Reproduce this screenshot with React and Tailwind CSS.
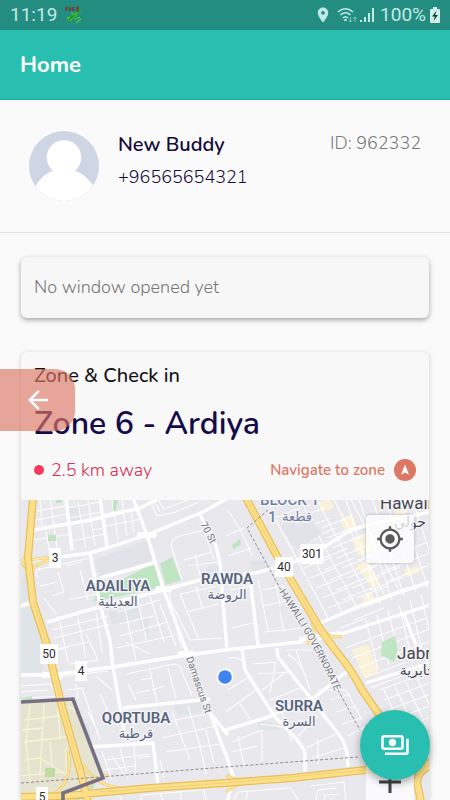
import { MdArrowBack, MdGpsFixed, MdLocationOn, MdOutlinePayments } from 'react-icons/md'

const HIGHWAYS = [
  'M33 498 L28 558 L33 602 L47 645 L62 707 L80 770 L88 802',
  'M246 498 L278 558 L322 632 L336 651 Q352 670 362 690 L378 713 L400 745 L418 772',
  'M18 797 L63 796 L150 788 L225 783 L292 778 L365 770 L432 763',
  'M432 765 Q418 770 417 782 L421 802'
]

const RAMPS = [
  'M68 750 Q74 785 50 796',
  'M84 765 Q92 785 125 789',
  'M70 802 Q84 786 108 774',
  'M22 562 Q26 556 28 548',
  'M22 562 Q27 568 29 576',
  'M29 560 L52 557',
  'M31 572 Q36 562 52 560',
  'M312 622 Q318 638 306 643',
  'M322 628 Q330 640 342 636',
  'M226 775 Q236 782 252 778',
  'M226 792 Q236 784 248 782'
]

const ROADS = [
  'M20 562 L90 553 L107 548 L147 535 L183 520 L203 512 L228 498',
  'M133 498 L147 535 L163 588 L187 652 L198 682 L210 713 L226 755 L233 775 L228 800',
  'M47 622 L117 602 L163 590 L200 580 L225 577 L255 573 L285 565 Q312 556 338 538 Q350 529 368 525 L430 512',
  'M66 498 L72 550',
  'M100 498 L107 546',
  'M33 530 L90 520 L140 508 L160 498',
  'M90 553 L100 605 L110 640 L113 667 L120 707 L124 730',
  'M100 578 L157 562',
  'M20 675 L50 675 L113 667 L187 655 L225 650 L300 642 L338 635 L430 605',
  'M318 624 L362 605 L430 582',
  'M250 578 L258 645',
  'M200 515 L212 535 Q222 560 222 590 L227 650',
  'M242 648 L245 670 L275 717 Q305 745 305 755 L305 772',
  'M277 648 L278 657 L312 700 L340 736 Q348 746 348 767',
  'M222 731 L268 717 L315 697 L342 675 L354 668',
  'M366 683 L430 663',
  'M403 612 L418 650',
  'M123 708 L210 699',
  'M90 747 L153 743 L158 785',
  'M210 713 L228 735',
  'M20 606 L33 603'
]

const STREETS = [
  'M36 511 L66 506 M35 520 L68 514 M34 540 L70 534 M50 498 L57 548 M40 500 L42 528 M46 532 L50 554',
  'M68 508 L100 502 M69 518 L101 512 M71 541 L105 534 M78 502 L86 548 M88 500 L95 546 M93 530 L104 528',
  'M104 514 L138 508 M105 526 L141 519 M112 500 L118 540 M122 500 L127 536 M131 510 L134 532',
  'M150 500 L157 516 L176 512 L199 502 M158 500 L164 509 L188 500 M160 512 L153 498',
  'M171 545 Q172 538 180 536 L204 530 L214 560 M171 545 L182 580 M184 560 L212 552 M195 555 L200 575 M188 566 L218 562',
  'M170 590 Q168 602 176 612 L190 640 L222 638 M180 594 L198 638 M180 594 L218 586 M186 612 L218 604 M196 586 L203 610',
  'M36 570 L90 558 M38 578 Q34 572 40 568 M40 586 L58 582 M58 572 L64 592 L52 596 M66 566 L82 562 M44 598 L56 614 M68 600 L96 594 M80 570 L88 600',
  'M52 630 L108 616 M54 638 L110 624 M60 622 L68 662 M78 618 L86 658 M96 612 L102 652 M52 650 L88 642 M86 634 L98 660 L70 664 M60 650 L70 646',
  'M118 612 L160 600 M120 624 L154 616 M116 648 L172 636 M124 604 L136 660 M138 600 L146 640 M150 596 L164 642 M120 636 L168 622 M160 604 L176 646 M126 642 L150 654 M176 626 L182 648',
  'M60 686 Q56 680 64 676 L108 671 M66 690 L82 688 L100 740 M76 684 L78 698 M96 676 L112 690 M88 712 L98 732 M100 694 L110 716',
  'M126 674 L174 664 Q180 664 182 672 L192 696 M128 684 L136 700 M150 670 L157 702 M168 668 L176 698 M140 680 L152 678 M132 694 L150 690 M152 690 L164 686',
  'M102 752 L112 780 M106 760 L150 754 M120 748 L128 778 M134 746 L136 776 M104 770 L134 766 M138 758 L150 756 M112 756 L124 774',
  'M162 738 L216 726 M165 752 L220 744 M172 712 L190 760 M188 706 L200 746 M200 746 L206 774 M160 760 L164 778 M206 730 L214 764 M166 722 L206 714',
  'M20 686 L50 684 Q56 690 58 702 M20 692 L48 690 M24 698 L58 696',
  'M228 510 L240 530 Q246 540 252 556 M228 556 L252 548 M226 536 L244 528 M230 590 L250 586 M232 628 L256 622 M258 580 L268 630 M262 590 L284 586 M262 606 L292 600 M264 632 L304 628 M276 584 L280 606 M280 612 L284 632',
  'M228 658 Q240 656 244 664 M252 664 L276 662 L270 692 M258 674 L290 672 M262 690 L286 672 M270 700 L300 688 M282 712 L292 742 M290 708 L302 700 M228 690 L250 676 M226 712 L258 688 M240 704 L252 722',
  'M232 742 L262 730 L262 762 M238 736 L244 766 M260 724 L290 728 M298 736 L318 716 M306 748 L336 734 M312 758 L344 748 M320 704 L332 728 M318 764 L318 740 M232 752 L258 746',
  'M288 654 Q300 662 306 676 M286 650 L312 650 M296 650 L310 690 M318 690 L346 690 L362 720 M330 700 L350 694 M336 712 L356 706 M342 724 L362 718 M348 736 L370 724',
  'M234 800 L238 792 L290 788 L300 802 M246 800 L248 790 M310 786 L344 782 L346 802 M316 800 L318 790 L336 788 M324 802 L325 795 L340 794 M330 802 L332 798',
  'M140 802 L142 795 L204 790 L206 802 M120 796 L122 802 M160 794 L164 802 M180 792 L182 802'
]

const ZONE_STREETS =
  'M24 742 L66 737 M24 720 L60 716 M30 704 L26 742 L30 782 M44 704 L40 776 M58 708 L60 740 M24 760 L40 758 L68 776 M20 776 L60 772 M66 748 L66 776 M50 742 L52 764 M22 730 L42 728 M68 706 L84 716'

// Small regular blocks east of the highway: [x, y, dx, dy, stepX, stepY, count]
const HATCHES = [
  [268, 508, 26, -10, 6, 10, 13],
  [294, 520, 30, -12, 6, 10, 11],
  [322, 528, 30, -12, 5, 10, 9],
  [350, 540, 34, -13, 4, 10, 7],
  [382, 560, 46, -18, 2, 11, 3],
  [276, 520, 52, 98, 14, -6, 6],
  [346, 500, 34, 104, 12, -4, 6],
  [366, 620, 12, 50, 11, -5, 6],
  [346, 648, 80, -30, 6, 10, 5],
  [380, 690, 48, -18, 4, 10, 5],
  [384, 690, 20, 44, 11, -4, 4]
]

const GREENS = [
  'M117 582 L155 563 L162 587 L93 602 L98 592 Z',
  'M160 564 L172 557 L181 580 L166 585 Z',
  'M48 535 h8 v6 h-8 Z',
  'M113 498 L118 498 L116 512 L113 510 Z',
  'M56 498 h6 v5 h-6 Z',
  'M232 545 L240 539 L241 545 L233 549 Z',
  'M382 642 L395 636 L398 650 L394 662 L381 655 Z',
  'M22 698 L32 696 L32 701 L22 702 Z',
  'M86 786 L96 784 L92 790 Z',
  'M72 796 L82 798 L76 802 Z'
]

const WATER = [
  'M21 608 L33 606 L46 648 L42 672 L21 673 Z',
  'M21 580 L27 566 L30 600 L21 602 Z',
  'M68 508 L80 506 L83 521 L70 523 Z',
  'M108 612 L138 606 L140 618 L112 624 Z',
  'M138 620 L148 618 L150 634 L142 630 Z',
  'M174 706 L202 702 L202 712 L178 716 Z',
  'M250 562 L266 560 L268 568 L252 572 Z',
  'M78 728 L88 724 L92 742 L76 744 Z',
  'M258 722 L272 722 L280 730 L260 730 Z',
  'M206 568 L222 564 L224 574 L206 577 Z'
]

// Large built-up lots without inner streets
const LOTS = [
  'M94 560 L148 540 L154 560 L100 576 Z',
  'M280 526 L306 512 L322 534 L296 550 Z'
]

const SHOPS = [
  'M352 540 L372 532 L378 548 L358 556 Z',
  'M340 520 L352 514 L356 526 L344 530 Z',
  'M356 566 L368 560 L380 584 L372 588 Z',
  'M392 504 L404 500 L408 512 L396 516 Z',
  'M352 650 L368 644 L378 672 L364 678 Z',
  'M362 596 L372 592 L374 600 L364 603 Z',
  'M318 502 L330 499 L334 508 L322 512 Z',
  'M404 570 L418 566 L420 572 L406 577 Z'
]

const DISTRICTS = [
  { name: 'ADAILIYA', arabic: 'العديلية', x: 118, y: 591 },
  { name: 'RAWDA', arabic: 'الروضة', x: 227, y: 584 },
  { name: 'QORTUBA', arabic: 'قرطبة', x: 136, y: 723 },
  { name: 'SURRA', arabic: 'السرة', x: 299, y: 711 }
]

const SHIELDS = [
  { label: '3', x: 55, y: 558, w: 12 },
  { label: '50', x: 49, y: 654, w: 18 },
  { label: '4', x: 81, y: 671, w: 12 },
  { label: '5', x: 42, y: 797, w: 12 },
  { label: '40', x: 284, y: 567, w: 18 },
  { label: '301', x: 312, y: 554, w: 23 }
]

function StatusBar() {
  return (
    <div className="flex h-[30px] items-center justify-between bg-[#238d82] px-[10px] font-['Roboto',sans-serif] text-[19px] leading-[30px] text-[#c3e9e4]">
      <div className="flex items-center gap-2">
        <span>11:19</span>
        <svg viewBox="0 0 18 18" className="size-[18px]" aria-hidden="true">
          <path d="M14 3 L10 7 L2 13 L5 16 L11 10 L16 5 Z" fill="#35b52c" />
          <path d="M6 7 L10 9 M2 11 L6 14 M10 13 L15 11 M11 17 L16 13" stroke="#4fd02f" strokeWidth="1.2" />
          <path d="M4 14 L9 9 M12 6 L15 4" stroke="#17711d" strokeWidth="1.2" strokeDasharray="2 1" />
          <path d="M1 5 V1 H3 M1 3 H3 M4 5 L5 1 L6 5 M8 1 V5 M10 1 L8 3 L10 5 M14 1 H12 V5 H14 M12 3 H14" stroke="#8d2b22" fill="none" />
        </svg>
      </div>
      <div className="flex items-center">
        <MdLocationOn className="mr-[5px] size-[18px]" />
        <svg viewBox="0 0 20 16" className="mr-[3px] h-4 w-5" fill="none" stroke="currentColor" strokeWidth="1.6">
          <path d="M1 5 Q8.500 -1.500 16 5 M3.500 8 Q8.500 3.500 13.500 8 M6 11 Q8.500 8.500 11 11" />
          <circle cx="8.500" cy="13" r="1.300" fill="currentColor" stroke="none" />
          <path d="M13.500 10 V15 M12 13.500 L13.500 15 L15 13.500 M18 15 V10 M16.500 11.500 L18 10 L19.500 11.500" strokeWidth="1" opacity="0.6" />
        </svg>
        <svg viewBox="0 0 14 14" className="mr-[6px] size-[14px]" fill="currentColor">
          <path d="M0 12 h2 v2 h-2 Z M4 9 h2 v5 h-2 Z M8 5 h2 v9 h-2 Z M12 0 h2 v14 h-2 Z" />
        </svg>
        <span>100%</span>
        <svg viewBox="0 0 10 16" className="ml-1 h-4 w-[10px]">
          <path d="M3 0 H7 V2 H9 Q10 2 10 3 V15 Q10 16 9 16 H1 Q0 16 0 15 V3 Q0 2 1 2 H3 Z" fill="#d3efeb" />
          <path d="M6.500 3.500 L2 9.500 H4.800 L3.500 14 L8 8 H5.200 Z" fill="#12403b" />
        </svg>
      </div>
    </div>
  )
}

function Profile() {
  return (
    <section className="flex gap-[19px] border-b border-[#e4e4e4] px-[29px] py-[31px]">
      <svg viewBox="0 0 70 70" className="size-[70px] shrink-0" role="img" aria-label="Avatar">
        <clipPath id="avatar">
          <circle cx="35" cy="35" r="35" />
        </clipPath>
        <g clipPath="url(#avatar)">
          <rect width="70" height="70" fill="#ced5e5" />
          <circle cx="35" cy="26.500" r="17.300" fill="#fff" />
          <path d="M6 56 Q14 42 26 39 H44 Q56 42 65 56 V70 H6 Z" fill="#fff" />
        </g>
      </svg>
      <div className="flex-1 text-[#150b3d]">
        <h2 className="text-[20px] font-semibold leading-[28px]">New Buddy</h2>
        <p className="mt-1 text-[18px] font-light leading-[28px]">+96565654321</p>
      </div>
      <p className="text-[18px] font-light leading-[24px] text-[#777]">ID: 962332</p>
    </section>
  )
}

function MapLabel({ name, arabic, x, y }) {
  return (
    <g fill="#56647c" stroke="#f4f4f7" strokeWidth="3" paintOrder="stroke" textAnchor="middle">
      <text x={x} y={y} fontSize="15" fontWeight="600">{name}</text>
      <text x={x} y={y + 15} fontSize="13">{arabic}</text>
    </g>
  )
}

function ZoneMap() {
  return (
    <svg
      viewBox="21 500 408 300"
      preserveAspectRatio="xMidYMin slice"
      className="block h-full w-full font-['Roboto','Noto_Sans','DejaVu_Sans',sans-serif]"
      role="img"
      aria-label="Map"
    >
      <rect x="21" y="500" width="408" height="300" fill="#e9e8ed" />
      <path d={WATER.join(' ')} fill="#dfe4e8" />
      <path d={SHOPS.join(' ')} fill="#fbf3d9" />

      <g fill="none" stroke="#fff" strokeLinejoin="round">
        {STREETS.map((d) => (
          <path key={d} d={d} strokeWidth="1.200" opacity="0.85" />
        ))}
        {HATCHES.map(([x, y, dx, dy, stepX, stepY, count]) =>
          Array.from({ length: count }, (_, i) => (
            <path key={`${x}-${y}-${i}`} d={`M${x + i * stepX} ${y + i * stepY} l${dx} ${dy}`} strokeWidth="1.200" opacity="0.85" />
          ))
        )}
      </g>

      <path d={LOTS.join(' ')} fill="#e2e3e9" />
      <path d={GREENS.join(' ')} fill="#bfe5c3" />

      <g fill="none" stroke="#fff" strokeLinejoin="round">
        {ROADS.map((d) => (
          <path key={d} d={d} strokeWidth="3.400" />
        ))}
        <path d="M140 535 H154 M158 589 H169 M181 654 H193 M302 640 L340 634 M44 675 H60" strokeWidth="6" strokeLinecap="round" />
      </g>

      <path d="M21 702 L73 699 L103 778 L63 793 V800 H21 Z" fill="#e4e3c6" fillOpacity="0.75" />
      <path d={ZONE_STREETS} fill="none" stroke="#f6f5d4" strokeWidth="1.300" />
      <path d="M45 768 h10 v9 h-10 Z" fill="#bddca4" />

      <g fill="none">
        <path d={RAMPS.join(' ')} stroke="#edc965" strokeWidth="3" />
        <path d={RAMPS.join(' ')} stroke="#fbe6a2" strokeWidth="1.800" />
        <path d={HIGHWAYS.join(' ')} stroke="#eabf57" strokeWidth="8" strokeLinejoin="round" />
        <path d={HIGHWAYS.join(' ')} stroke="#fbdf8b" strokeWidth="5.600" strokeLinejoin="round" />
        <path d="M34 602 L47 645 L62 707 L80 770 M246 498 L278 558 L322 632 M100 792 L225 783 L365 770" stroke="#f3cd6d" strokeWidth="0.800" />
        <path
          d="M21 783 L100 777 L225 767 L358 757 M268 510 L247 528 L281 590 M338 690 L360 730"
          stroke="#8e8c93"
          strokeDasharray="3 2"
        />
        <path d="M20 702 L73 699 L103 778 L63 793 V802" stroke="#777083" strokeWidth="3.600" />
      </g>

      {DISTRICTS.map((district) => (
        <MapLabel key={district.name} {...district} />
      ))}

      <g fill="#7082a3" stroke="#f4f4f7" strokeWidth="3" paintOrder="stroke">
        <text x="260" y="505" fontSize="15" fontWeight="500">BLOCK 1</text>
        <text x="268" y="522" fontSize="15" fontWeight="500">1</text>
        <text x="297" y="521" fontSize="13" textAnchor="middle">قطعة</text>
      </g>
      <g fill="#45474d" stroke="#f4f4f7" strokeWidth="3" paintOrder="stroke">
        <text x="380" y="509" fontSize="17">Hawalli</text>
        <text x="410" y="527" fontSize="14" textAnchor="middle">حولي</text>
        <text x="397" y="659" fontSize="17">Jabriya</text>
        <text x="422" y="675" fontSize="14" textAnchor="middle">الجابرية</text>
      </g>

      <path id="governorate" d="M279 592 Q312 640 334 690" fill="none" />
      <g fill="#76777d" stroke="#f4f4f7" strokeWidth="2" paintOrder="stroke" fontSize="10">
        <text>
          <textPath href="#governorate">HAWALLI GOVERNORATE</textPath>
        </text>
        <text transform="translate(200 524) rotate(62)">70 St</text>
        <text transform="translate(186 658) rotate(71)">Damascus St</text>
      </g>

      {SHIELDS.map(({ label, x, y, w }) => (
        <g key={label}>
          <rect x={x - w / 2} y={y - 10} width={w} height="20" rx="1" fill="#fff" />
          <text x={x} y={y + 4} fontSize="12" textAnchor="middle" fill="#2b2b2b">{label}</text>
        </g>
      ))}

      <circle cx="225" cy="677" r="8.500" fill="#fff" />
      <circle cx="225" cy="677" r="6.800" fill="#3f83ee" />
    </svg>
  )
}

function ZoneCard() {
  return (
    <section className="mt-[34px] flex flex-1 flex-col overflow-hidden rounded-t-md bg-[#f8f8f8] shadow-[0_1px_5px_rgba(0,0,0,0.2)]">
      <div className="px-[13px] pb-[18px] pt-3">
        <h3 className="text-[20px] font-medium leading-[24px] text-[#111]">Zone &amp; Check in</h3>
        <p className="mt-3 text-[32px] font-semibold leading-[48px] text-[#150b4a]">Zone 6 - Ardiya</p>
        <div className="mt-[10px] flex items-center justify-between leading-[24px]">
          <p className="flex items-center gap-[7px] text-[18px] font-light text-[#d62e52]">
            <span className="size-[10px] rounded-full bg-[#f9385f]" />
            2.5 km away
          </p>
          <a href="#navigate" className="flex items-center gap-[9px] text-[15px] font-semibold text-[#dd7866]">
            Navigate to zone
            <span className="flex size-[22px] items-center justify-center rounded-full bg-[#dd7866] text-white">
              <svg viewBox="0 0 10 12" className="h-3 w-[10px]" fill="currentColor">
                <path d="M5 0.500 L9 10.800 L5 8.600 L1 10.800 Z" />
              </svg>
            </span>
          </a>
        </div>
      </div>
      <div className="relative min-h-[300px] flex-1">
        <div className="absolute inset-0">
          <ZoneMap />
        </div>
        <button
          type="button"
          aria-label="My location"
          className="absolute right-[15px] top-[15px] flex size-12 items-center justify-center rounded-sm bg-white/75 text-[#5a5a5a] shadow-[0_0_3px_rgba(0,0,0,0.3)]"
        >
          <MdGpsFixed className="size-7" />
        </button>
        <button
          type="button"
          aria-label="Zoom in"
          className="absolute bottom-0 right-[15px] flex h-10 w-12 items-center justify-center bg-white/75 pt-1 text-[#444]"
        >
          <svg viewBox="0 0 22 22" className="size-[22px]" stroke="currentColor" strokeWidth="3">
            <path d="M11 0 V22 M0 11 H22" />
          </svg>
        </button>
      </div>
    </section>
  )
}

export default function App() {
  return (
    <div className="flex min-h-screen flex-col overflow-hidden bg-[#fafafa] font-['Nunito','Lato',sans-serif]">
      <StatusBar />
      <header className="flex h-[70px] items-center border-b border-[#20a99b] bg-[#29bfb0] px-5">
        <h1 className="text-[22px] font-bold leading-[28px] text-white">Home</h1>
      </header>
      <Profile />
      <main className="flex flex-1 flex-col px-[21px] pt-6">
        <section className="rounded-md bg-[#f7f7f7] px-[13px] py-[18px] text-[18px] font-light leading-[25px] text-[#777] shadow-[0_2px_5px_rgba(0,0,0,0.35)]">
          No window opened yet
        </section>
        <ZoneCard />
      </main>

      <button
        type="button"
        aria-label="Back"
        className="fixed left-0 top-[369px] flex h-[62px] w-[75px] items-center justify-center rounded-r-[20px] bg-[#dd7866]/65 text-white"
      >
        <MdArrowBack className="size-[30px]" />
      </button>
      <button
        type="button"
        aria-label="Payments"
        className="fixed bottom-5 right-5 flex size-[70px] items-center justify-center rounded-full bg-[#29bfb0] text-white shadow-[0_3px_8px_rgba(0,0,0,0.35)]"
      >
        <MdOutlinePayments className="size-[30px]" />
      </button>
    </div>
  )
}
